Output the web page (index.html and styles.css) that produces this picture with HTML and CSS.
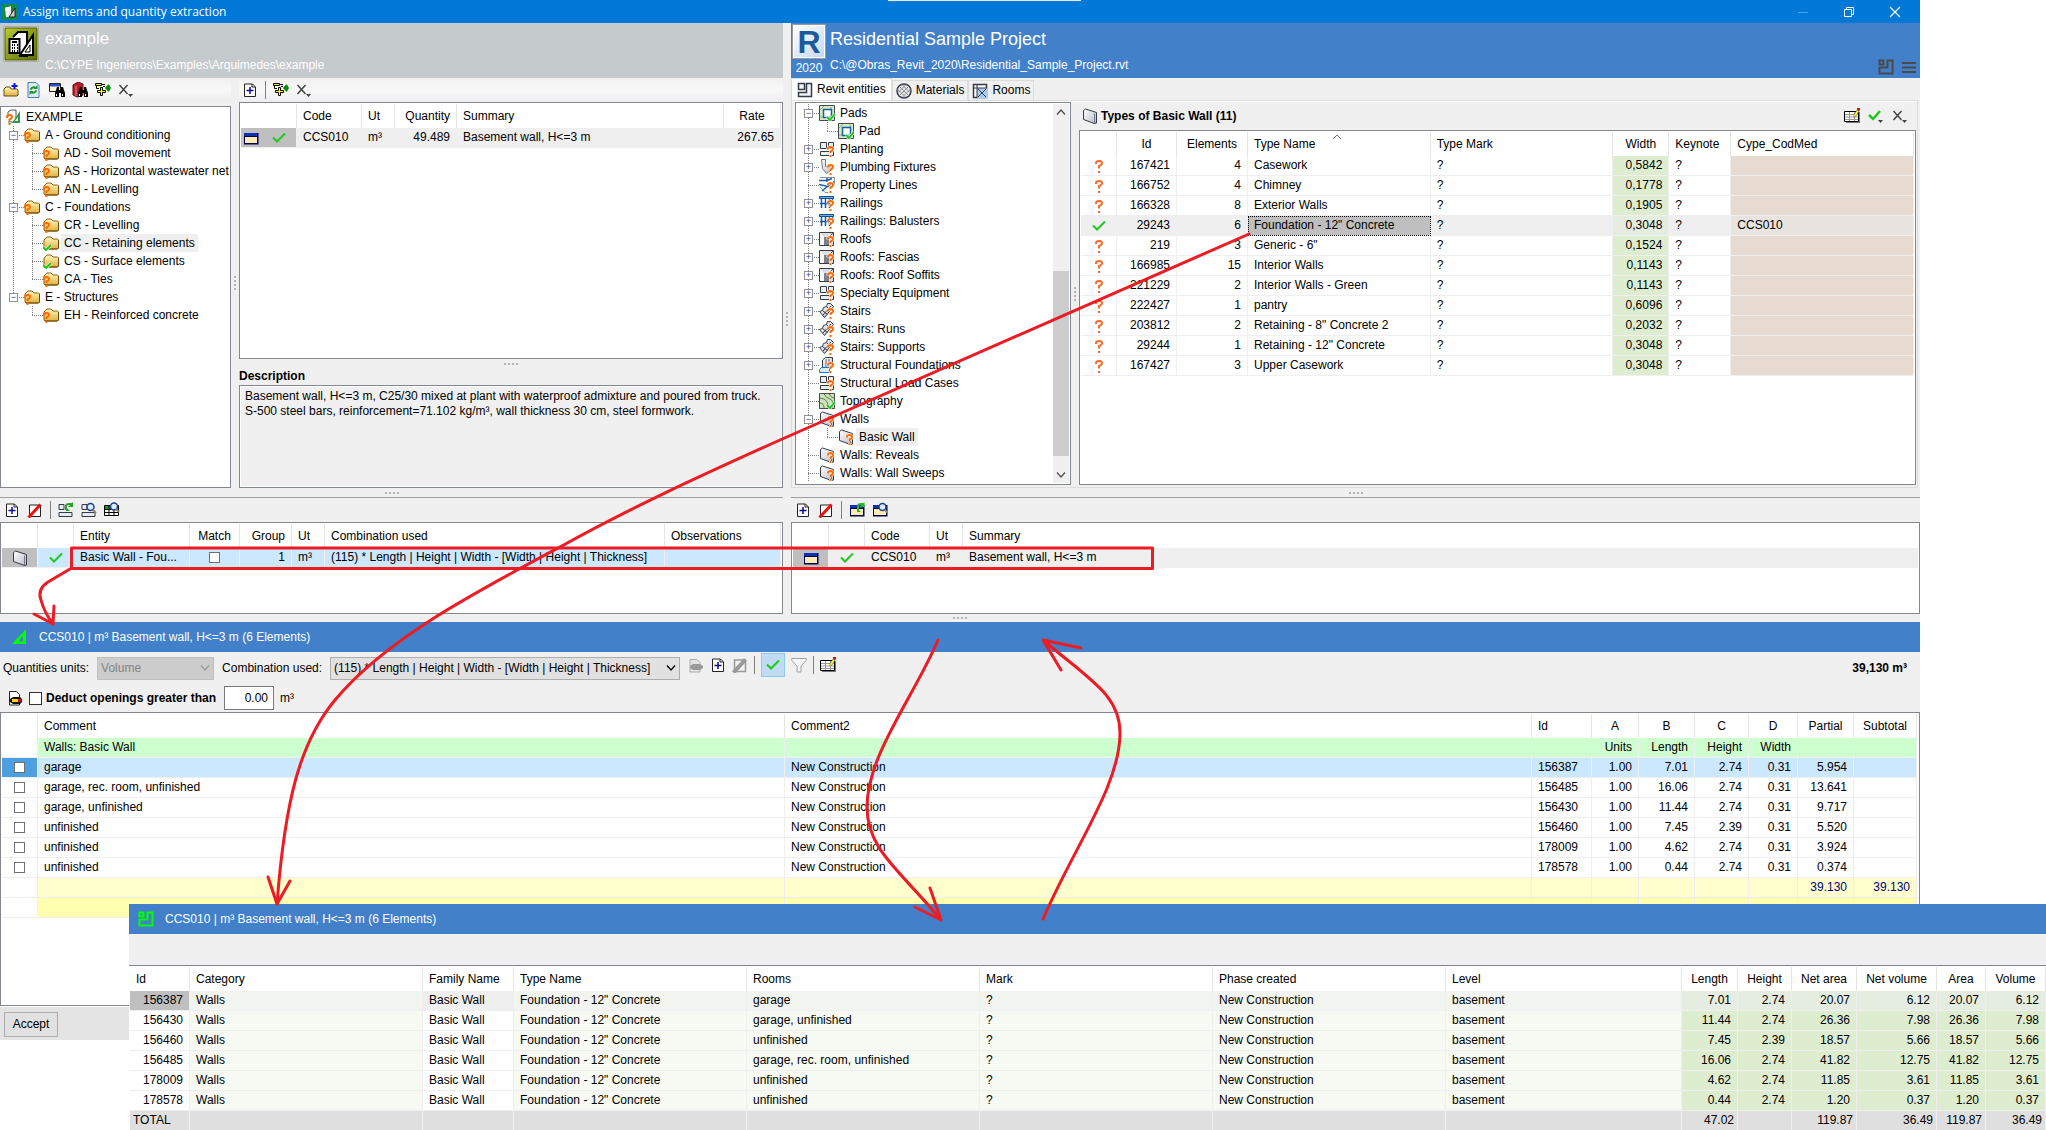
FILE: index.html
```html
<!DOCTYPE html>
<html lang="en">
<head>
  <meta charset="UTF-8">
  <meta name="viewport" content="width=device-width, initial-scale=1.0">
  <title>Assign items and quantity extraction</title>
  <link rel="stylesheet" href="styles.css">
</head>
<body>
  <!-- Icon set -->
  <svg class="icon-set" aria-hidden="true">
    <defs>
      <linearGradient id="gold" x1="0" y1="0" x2="0" y2="1"><stop offset="0" stop-color="#fff6c0"/><stop offset="1" stop-color="#e3b13c"/></linearGradient>
      <linearGradient id="steel" x1="0" y1="0" x2="1" y2="1"><stop offset="0" stop-color="#ffffff"/><stop offset="1" stop-color="#b9bcc8"/></linearGradient>
      <linearGradient id="olive" x1="0" y1="0" x2="1" y2="1"><stop offset="0" stop-color="#b9cc2c"/><stop offset="1" stop-color="#5d6c08"/></linearGradient>
    </defs>
    <symbol id="q" viewBox="0 0 16 16"><path d="M9 8.500v-1q0-1.500 2.500-1.500t2.500 2q0 1.500-2.500 2.500v1.500M11.500 14v2" fill="none" stroke="#fff" stroke-width="3"/><path d="M9 8.500v-1q0-1.500 2.500-1.500t2.500 2q0 1.500-2.500 2.500v1.500M11.500 14v2" fill="none" stroke="#ff6a00" stroke-width="2"/></symbol>
    <symbol id="ok" viewBox="0 0 16 16"><path d="M8 12l3 3 5-6" fill="none" stroke="#fff" stroke-width="3"/><path d="M8 12l3 3 5-6" fill="none" stroke="#1fc81f" stroke-width="2"/></symbol>
    <symbol id="folder" viewBox="0 0 16 16"><path d="M1 13V5l3-3h4l2 2h4.500l1 1v8l-1.500 1H2z" fill="url(#gold)" stroke="#8a6414"/><path d="M2 14h12.500l1-1V5" fill="none" stroke="#6b4a08"/></symbol>
    <symbol id="folder-q" viewBox="0 0 16 16"><use href="#folder"/><path d="M1 9V8q0-2 2.500-2T6 8q0 1.500-2.500 2.500V12M3.500 14v2" fill="none" stroke="#ff6a00" stroke-width="2"/></symbol>
    <symbol id="folder-ok" viewBox="0 0 16 16"><use href="#folder"/><path d="M0 12l3 3 5-5" fill="none" stroke="#fff" stroke-width="3"/><path d="M0 12l3 3 5-5" fill="none" stroke="#1fc81f" stroke-width="2"/></symbol>
    <symbol id="root" viewBox="0 0 16 16"><path d="M3 8V3l3-2h5v12H3" fill="#fff" stroke="#555"/><path d="M15 2v12H7z" fill="#2f9a4c"/><path d="M13 8v4h-3z" fill="#fff"/><path d="M2 9V8q0-2 2.500-2T7 8q0 1.500-2.500 2.500V12M4.500 14v2" fill="none" stroke="#ff6a00" stroke-width="2"/></symbol>
    <symbol id="new-folder" viewBox="0 0 16 16"><path d="M1 14V7l2-2h4l1 2h6l1 1v5l-1 1z" fill="url(#gold)" stroke="#6b4a08"/><path d="M11.500 1v6M8.500 4h6" stroke="#1414e0" stroke-width="2"/></symbol>
    <symbol id="refresh" viewBox="0 0 16 16"><path d="M2 .5h8l3 3v12H2z" fill="#d9ebfb" stroke="#4a7fb5"/><path d="M4.500 7.500q3-4 6-1M10.500 8.500q-3 4-6 1" fill="none" stroke="#20962a" stroke-width="2"/><path d="M11.500 3v4h-4zM3.500 13V9h4z" fill="#20962a"/></symbol>
    <symbol id="bino" viewBox="0 0 16 16"><path d="M6 15V11l2-6h2v3h2V5h2l2 6v4h-4v-4h-2v4z" fill="#000"/><path d="M7.500 12v2M13.500 12v2" stroke="#fff"/></symbol>
    <symbol id="find-item" viewBox="0 0 16 16"><path d="M.5 1.500h11v8H.5z" fill="#fffbd0" stroke="#222"/><path d="M1 2h10v2.500H1z" fill="#2a4fc8"/><use href="#bino"/></symbol>
    <symbol id="find-red" viewBox="0 0 16 16"><path d="M1 3l5-3 5 2v11l-6 2-4-2z" fill="#b3202a" stroke="#6d0b12"/><path d="M4 4v10" stroke="#ee8a90"/><use href="#bino"/></symbol>
    <symbol id="assign" viewBox="0 0 16 16"><path d="M.5 1.500h6v2h-6z" fill="#ff0" stroke="#000"/><path d="M1.500 4v2.500H4" fill="none" stroke="#000"/><path d="M5.500 5.500h2v3h3v2h-3v3h-2v-3h-3v-2h3z" fill="#ff0" stroke="#000"/><path d="M10 6l3-3.500h1L16 6l-2 3.500h-1z" fill="#0a8a0a"/><path d="M7 2.500h3M8 4.500h2" stroke="#000"/></symbol>
    <symbol id="cross" viewBox="0 0 16 16"><path d="M1.500 3l8 9M9.500 3l-8 9" stroke="#444" stroke-width="1.500"/><path d="M10 12h5l-2.500 3z" fill="#444"/></symbol>
    <symbol id="check-menu" viewBox="0 0 16 16"><path d="M1 7l4 4 7-8" fill="none" stroke="#1fc81f" stroke-width="2.500"/><path d="M10 12h5l-2.500 3z" fill="#444"/></symbol>
    <symbol id="check" viewBox="0 0 16 16"><path d="M2 7.500l4 4 8-8" fill="none" stroke="#1fc81f" stroke-width="2"/></symbol>
    <symbol id="ask" viewBox="0 0 16 16"><path d="M5 6V5q0-2 3-2t3 2q0 2-3 3v2.500M8 13v2" fill="none" stroke="#ff6a2a" stroke-width="2"/></symbol>
    <symbol id="new-doc" viewBox="0 0 16 16"><path d="M2.500 2h8l3 3v9.500h-11z" fill="#fff" stroke="#222"/><path d="M10 2v3h3" fill="none" stroke="#222"/><path d="M8 5v7M4.500 8.500h7" stroke="#0a0a90" stroke-width="1.500"/></symbol>
    <symbol id="edit-doc" viewBox="0 0 16 16"><path d="M2.500 3h11v11.500h-11z" fill="#fff" stroke="#222"/><path d="M1.500 15.500l12-13" stroke="#f01010" stroke-width="3"/></symbol>
    <symbol id="edit-doc-off" viewBox="0 0 16 16"><path d="M2.500 3h11v11.500h-11z" fill="none" stroke="#999" stroke-width="1.500"/><path d="M1.500 15.500l12-13" stroke="#999" stroke-width="4"/></symbol>
    <symbol id="sync-ent" viewBox="0 0 16 16"><path d="M1 2.500h5v5H1zM1 10.500h13v4H1z" fill="#e8eaf0" stroke="#333a48"/><path d="M8 8V4q0-2 3-2h3" fill="none" stroke="#28a820" stroke-width="2"/><path d="M15 0v5h-5zM8 9V5l4 4z" fill="#28a820"/></symbol>
    <symbol id="find-ent" viewBox="0 0 16 16"><path d="M1 2.500h5v5H1zM1 10.500h13v4H1z" fill="#e8eaf0" stroke="#333a48"/><circle cx="9.500" cy="5" r="3.500" fill="#dcecff" stroke="#24408a" stroke-width="1.500"/><path d="M12 8l3 3" stroke="#886" stroke-width="2"/></symbol>
    <symbol id="find-grid" viewBox="0 0 16 16"><path d="M.5 3.500h14v10H.5z" fill="#fff" stroke="#000"/><path d="M1 4h6v3H1z" fill="#18902c"/><path d="M0 7.500h15M0 10.500h15M5 4v9M10 4v9" stroke="#000"/><circle cx="10" cy="4.500" r="3.500" fill="#dcecff" stroke="#24408a" stroke-width="1.500"/><path d="M12 7l3 3" stroke="#886" stroke-width="2"/></symbol>
    <symbol id="item" viewBox="0 0 16 16"><path d="M1 3h14.500v11.500H1z" fill="#000050"/><path d="M1 3h13v3H1z" fill="#1030b8"/><path d="M2 7h12v6H2z" fill="#ffedb0"/></symbol>
    <symbol id="sync-item" viewBox="0 0 16 16"><use href="#item"/><path d="M9 9V4q0-2 3-2h2" fill="none" stroke="#28b820" stroke-width="2"/><path d="M15.500 0v5h-5zM8 10V6l4 4z" fill="#28b820"/></symbol>
    <symbol id="find-item2" viewBox="0 0 16 16"><use href="#item"/><circle cx="10.500" cy="5" r="3.500" fill="#dcecff" stroke="#24408a" stroke-width="1.500"/><path d="M13 8l3 3" stroke="#886" stroke-width="2"/></symbol>
    <symbol id="grid-edit" viewBox="0 0 16 16"><path d="M2 4h14v11H2z" fill="#777"/><path d="M.5 3.500h14v10H.5z" fill="#fff" stroke="#000"/><path d="M1 6.500h13M1 9h13M1 11.500h13M5.500 4v9M10.500 4v9" stroke="#999"/><path d="M10 7l3-5 2 1-3 5-2 1z" fill="#ff0" stroke="#555" stroke-width=".5"/><path d="M13 0h3v2l-1 1-2-1z" fill="#d01010"/></symbol>
    <symbol id="wall" viewBox="0 0 16 16"><path d="M1.500 2.500l2-1.500 11 3.500V15l-2 .5-11-4z" fill="url(#steel)" stroke="#333a48" stroke-linejoin="round"/><path d="M12.500 5.500V15" stroke="#778"/></symbol>
    <symbol id="wall-q" viewBox="0 0 16 16"><use href="#wall"/><use href="#q"/></symbol>
    <symbol id="pad" viewBox="0 0 16 16"><path d="M.5.500h15v15H.5z" fill="#d5e8c4" stroke="#444b4a"/><path d="M1 5l4-4M11 15l4-4M1 12h3M12 2v2" stroke="#8bae78"/><path d="M4.500 4.500h8v8h-8z" fill="#fff" stroke="#1560a8" stroke-width="1.500"/><use href="#ok"/></symbol>
    <symbol id="boxes" viewBox="0 0 16 16"><path d="M1.500 1.500h6v6h-6zM9.500 1.500h5v6h-5zM1.500 10.500h13v4h-13z" fill="#eceef3" stroke="#333a48"/><use href="#q"/></symbol>
    <symbol id="plumb" viewBox="0 0 16 16"><path d="M2.500.500h4v7h6l-1 4-4 3-4-5z" fill="url(#steel)" stroke="#707680"/><use href="#q"/></symbol>
    <symbol id="lines" viewBox="0 0 16 16"><path d="M1 .5h14.500V8M1 10l5 5.500h3" fill="none" stroke="#8a909a"/><path d="M0 3.500h8l5-2M0 7.500l9 2 6-5M8 1v4M3 14l6-5" fill="none" stroke="#1560a8" stroke-width="1.500"/><use href="#q"/></symbol>
    <symbol id="rail" viewBox="0 0 16 16"><path d="M.5 1.500h14v2H.5z" fill="#6ab0e8" stroke="#0d4f90"/><path d="M2.500 4v9M6.500 4v9M10.500 4v9M13.500 4v3M1 8.500h10" stroke="#0d5aa5" stroke-width="1.500"/><use href="#q"/></symbol>
    <symbol id="roof" viewBox="0 0 16 16"><path d="M.5 1.500h14v13H.5z" fill="#dcdee4" stroke="#333a48"/><path d="M1 2l4 4v8H1z" fill="#fff"/><path d="M5 6h5v8H5z" fill="#7d818c"/><path d="M10 6l4-4" stroke="#555"/><use href="#q"/></symbol>
    <symbol id="stairs" viewBox="0 0 16 16"><path d="M.5 8.500l3-1 1-3 3-1 1-3h3l3 3-9 11z" fill="url(#steel)" stroke="#333a48"/><path d="M3.500 7.500l5 4M7.500 3.500l4 4M4 12l8-9" stroke="#333a48"/><use href="#q"/></symbol>
    <symbol id="found" viewBox="0 0 16 16"><path d="M3.500 11V3l3-2.500h7V11" fill="url(#steel)" stroke="#333a48"/><path d="M7 2v9M10 2v4" stroke="#667"/><path d="M.5 12.500l2-2h8v5h-10z" fill="#d6ebfb" stroke="#1a78c8"/><use href="#q"/></symbol>
    <symbol id="topo" viewBox="0 0 16 16"><path d="M.5.500h15v15H.5z" fill="#cfe3bb" stroke="#444b4a"/><path d="M1 5q9 1 8 10M5 1q2 4 6 5t2 9M1 10q4 0 4 5M10 1q1 3 5 4" fill="none" stroke="#5d7a58"/><use href="#ok"/></symbol>
    <symbol id="entities" viewBox="0 0 16 16"><path d="M1.500 1.500h6v6h-6zM9.500 1.500h5v13h-13v-4h8z" fill="#f2f3f6" stroke="#333a48" stroke-width="1.500"/></symbol>
    <symbol id="material" viewBox="0 0 16 16"><circle cx="8" cy="8" r="7" fill="#e8e8e8" stroke="#333a48" stroke-width="1.500"/><path d="M3 3l10 10M6 1.500L14.500 10M1.500 6L10 14.500M13 3L3 13M10 1.500L1.500 10M14.500 6L6 14.500" stroke="#8d8f98"/></symbol>
    <symbol id="rooms" viewBox="0 0 16 16"><path d="M1.500 1.500h13v13h-13z" fill="#fff" stroke="#333a48" stroke-width="1.500"/><path d="M5 5h10v10H5z" fill="#a9cdee"/><path d="M5 2v13M2 5h13M6 6l8 8M14 6l-8 8" stroke="#333a48"/></symbol>
    <symbol id="plan" viewBox="0 0 16 16"><path d="M1.500 1.500h4v4h-4zM9.500 1.500h5v13h-13V8.500h8z" fill="none" stroke="currentColor" stroke-width="2"/></symbol>
    <symbol id="menu" viewBox="0 0 16 16"><path d="M1 4h14M1 8.500h14M1 13h14" stroke="currentColor" stroke-width="2"/></symbol>
    <symbol id="cloud-off" viewBox="0 0 16 16"><path d="M2 2.500h7l3 3V15H2z" fill="#e4e4e4" stroke="#aaa"/><path d="M2 9l3-2h7l3 2v2l-3 2H5l-3-2z" fill="#999"/></symbol>
    <symbol id="funnel" viewBox="0 0 16 16"><path d="M.8 1.500h14.400v2L10 9v6H6V9L.8 3.500z" fill="#f6f6f6" stroke="#a0a0a8"/></symbol>
    <symbol id="square" viewBox="0 0 16 16"><path d="M14 0v15H0zM11 7v5.500H6z" fill="#0f0" fill-rule="evenodd"/></symbol>
    <symbol id="opening" viewBox="0 0 16 16"><path d="M2.500 1.500h7l3 3V15h-10z" fill="#fff" stroke="#222"/><path d="M3 9l3-2h7l2 2v3l-2 2H6l-3-2z" fill="#111"/><path d="M5 9h6v3H5z" fill="#ffd800"/><path d="M11 9h3v3h-3z" fill="#d01010"/></symbol>
    <symbol id="chevron" viewBox="0 0 16 16"><path d="M4 5.500l4 4.500 4-4.500" fill="none" stroke="currentColor" stroke-width="1.300"/></symbol>
  </svg>

  <div class="window">
    <header class="titlebar">
      <svg class="icon" viewBox="0 0 16 16"><path d="M0 0h16v16H0z" fill="#128a4a"/><path d="M3 4l6-2v11H4z" fill="#eee"/><path d="M13 4v9H7z" fill="#ccc" stroke="#222"/><circle cx="5" cy="5" r="2" fill="#fff"/></svg>
      <h1>Assign items and quantity extraction</h1>
      <div class="title-buttons">
        <button aria-label="Minimize"><svg class="icon" viewBox="0 0 16 16"><path d="M3 8.500h10" stroke="#4aa0e6"/></svg></button>
        <button aria-label="Restore"><svg class="icon" viewBox="0 0 16 16"><path d="M3.500 5.500h7v7h-7zM5.500 5V3.500h7v7H11" fill="none" stroke="#fff"/></svg></button>
        <button aria-label="Close"><svg class="icon" viewBox="0 0 16 16"><path d="M3 3l10 10M13 3L3 13" stroke="#fff" stroke-width="1.200"/></svg></button>
      </div>
    </header>

    <div class="workspace">
      <section class="side">
        <div class="banner banner-gray">
          <svg class="logo" viewBox="0 0 36 36"><path d="M.5.500h35v35H.5z" fill="#e9ead8" stroke="#aaa"/><path d="M2 2h32v32H2z" fill="url(#olive)" stroke="#4c5a06"/><path d="M10 11l5-5h9v24h-8" fill="#fff" stroke="#000" stroke-width="2"/><path d="M30 9v20H17z" fill="#fff" stroke="#000" stroke-width="2"/><path d="M27 19v7h-5z" fill="#fff" stroke="#000"/><path d="M6.500 13h10v14h-10z" fill="#fff" stroke="#000" stroke-width="2"/><path d="M9 16h5M9 19h1M11 19h1M14 19h1M9 22h1M11 22h1M14 22h1M9 25h1M11 25h1M14 25h1" stroke="#000" stroke-width="2"/></svg>
          <div class="banner-text">
            <h2>example</h2>
            <p>C:\CYPE Ingenieros\Examples\Arquimedes\example</p>
          </div>
        </div>
        <div class="job">
          <div class="job-tree">
            <div class="toolbar">
              <button aria-label="New chapter"><svg class="icon"><use href="#new-folder"/></svg></button>
              <button aria-label="Refresh"><svg class="icon"><use href="#refresh"/></svg></button>
              <button aria-label="Find item"><svg class="icon"><use href="#find-item"/></svg></button>
              <button aria-label="Find in bank"><svg class="icon"><use href="#find-red"/></svg></button>
              <button aria-label="Assign"><svg class="icon"><use href="#assign"/></svg></button>
              <button aria-label="Remove"><svg class="icon"><use href="#cross"/></svg></button>
            </div>
            <div class="box tree">
              <div class="row root"><svg class="icon"><use href="#root"/></svg><span class="label">EXAMPLE</span></div>
              <ul>
                <li><div class="row"><button class="toggle" aria-label="Collapse">−</button><svg class="icon"><use href="#folder-q"/></svg><span class="label">A - Ground conditioning</span></div>
                  <ul>
                    <li><div class="row"><svg class="icon"><use href="#folder-q"/></svg><span class="label">AD - Soil movement</span></div></li>
                    <li><div class="row"><svg class="icon"><use href="#folder-q"/></svg><span class="label">AS - Horizontal wastewater net</span></div></li>
                    <li><div class="row"><svg class="icon"><use href="#folder-q"/></svg><span class="label">AN - Levelling</span></div></li>
                  </ul>
                </li>
                <li><div class="row"><button class="toggle" aria-label="Collapse">−</button><svg class="icon"><use href="#folder-q"/></svg><span class="label">C - Foundations</span></div>
                  <ul>
                    <li><div class="row"><svg class="icon"><use href="#folder-q"/></svg><span class="label">CR - Levelling</span></div></li>
                    <li><div class="row"><svg class="icon"><use href="#folder-ok"/></svg><span class="label selected">CC - Retaining elements</span></div></li>
                    <li><div class="row"><svg class="icon"><use href="#folder-ok"/></svg><span class="label">CS - Surface elements</span></div></li>
                    <li><div class="row"><svg class="icon"><use href="#folder-q"/></svg><span class="label">CA - Ties</span></div></li>
                  </ul>
                </li>
                <li><div class="row"><button class="toggle" aria-label="Collapse">−</button><svg class="icon"><use href="#folder-q"/></svg><span class="label">E - Structures</span></div>
                  <ul>
                    <li><div class="row"><svg class="icon"><use href="#folder-q"/></svg><span class="label">EH - Reinforced concrete</span></div></li>
                  </ul>
                </li>
              </ul>
            </div>
          </div>
          <div class="split-v"></div>
          <div class="job-items">
            <div class="toolbar">
              <button aria-label="New item"><svg class="icon"><use href="#new-doc"/></svg></button>
              <span class="sep"></span>
              <button aria-label="Assign"><svg class="icon"><use href="#assign"/></svg></button>
              <button aria-label="Remove"><svg class="icon"><use href="#cross"/></svg></button>
            </div>
            <div class="box grow">
              <table>
                <colgroup><col class="w20"><col class="w36"><col class="w65"><col class="w33"><col class="w62"><col><col class="w57"></colgroup>
                <thead><tr><th class="plain"></th><th></th><th>Code</th><th>Ut</th><th class="num">Quantity</th><th>Summary</th><th class="mid">Rate</th></tr></thead>
                <tbody><tr class="current"><td class="mark joined"><svg class="icon"><use href="#item"/></svg></td><td class="mark"><svg class="icon"><use href="#check"/></svg></td><td>CCS010</td><td>m³</td><td class="num">49.489</td><td>Basement wall, H&lt;=3 m</td><td class="num">267.65</td></tr></tbody>
              </table>
            </div>
            <div class="split-h"></div>
            <label class="desc-label" for="description">Description</label>
            <textarea id="description" class="description" readonly>Basement wall, H&lt;=3 m, C25/30 mixed at plant with waterproof admixture and poured from truck.
S-500 steel bars, reinforcement=71.102 kg/m³, wall thickness 30 cm, steel formwork.</textarea>
          </div>
        </div>
        <div class="split-h"></div>
        <div class="toolbar ruled">
          <button aria-label="New row"><svg class="icon"><use href="#new-doc"/></svg></button>
          <button aria-label="Delete row"><svg class="icon"><use href="#edit-doc"/></svg></button>
          <span class="sep"></span>
          <button aria-label="Update entities"><svg class="icon"><use href="#sync-ent"/></svg></button>
          <button aria-label="Find entities"><svg class="icon"><use href="#find-ent"/></svg></button>
          <button aria-label="Find in list"><svg class="icon"><use href="#find-grid"/></svg></button>
        </div>
        <div class="box links">
          <table>
            <colgroup><col class="w36"><col class="w36"><col class="w116"><col class="w50"><col class="w52"><col class="w33"><col><col class="w116"></colgroup>
            <thead><tr><th></th><th></th><th>Entity</th><th class="mid">Match</th><th class="num">Group</th><th>Ut</th><th>Combination used</th><th>Observations</th></tr></thead>
            <tbody><tr class="active"><td class="mark"><svg class="icon"><use href="#wall"/></svg></td><td class="mid"><svg class="icon"><use href="#check"/></svg></td><td>Basic Wall - Fou...</td><td class="mid"><input type="checkbox" aria-label="Match"></td><td class="num">1</td><td>m³</td><td>(115) * Length | Height | Width - [Width | Height | Thickness]</td><td></td></tr></tbody>
          </table>
        </div>
      </section>

      <div class="split-v"></div>

      <section class="side">
        <div class="banner banner-blue">
          <div class="revit"><span class="revit-logo">R</span><span>2020</span></div>
          <div class="banner-text">
            <h2 class="wide">Residential Sample Project</h2>
            <p>C:\@Obras_Revit_2020\Residential_Sample_Project.rvt</p>
          </div>
          <div class="banner-tools">
            <button aria-label="Plan"><svg class="icon"><use href="#plan"/></svg></button>
            <button aria-label="Menu"><svg class="icon"><use href="#menu"/></svg></button>
          </div>
        </div>
        <div class="tabs" role="tablist">
          <button role="tab" class="tab open" aria-selected="true"><svg class="icon"><use href="#entities"/></svg>Revit entities</button>
          <button role="tab" class="tab"><svg class="icon"><use href="#material"/></svg>Materials</button>
          <button role="tab" class="tab"><svg class="icon"><use href="#rooms"/></svg>Rooms</button>
        </div>
        <div class="tab-page">
          <div class="box tree tree-scroll">
            <ul class="continued">
              <li><div class="row"><button class="toggle" aria-label="Collapse">−</button><svg class="icon"><use href="#pad"/></svg><span class="label">Pads</span></div>
                <ul><li><div class="row"><svg class="icon"><use href="#pad"/></svg><span class="label">Pad</span></div></li></ul>
              </li>
              <li><div class="row"><button class="toggle" aria-label="Expand">+</button><svg class="icon"><use href="#boxes"/></svg><span class="label">Planting</span></div></li>
              <li><div class="row"><button class="toggle" aria-label="Expand">+</button><svg class="icon"><use href="#plumb"/></svg><span class="label">Plumbing Fixtures</span></div></li>
              <li><div class="row"><svg class="icon"><use href="#lines"/></svg><span class="label">Property Lines</span></div></li>
              <li><div class="row"><button class="toggle" aria-label="Expand">+</button><svg class="icon"><use href="#rail"/></svg><span class="label">Railings</span></div></li>
              <li><div class="row"><button class="toggle" aria-label="Expand">+</button><svg class="icon"><use href="#rail"/></svg><span class="label">Railings: Balusters</span></div></li>
              <li><div class="row"><button class="toggle" aria-label="Expand">+</button><svg class="icon"><use href="#roof"/></svg><span class="label">Roofs</span></div></li>
              <li><div class="row"><button class="toggle" aria-label="Expand">+</button><svg class="icon"><use href="#roof"/></svg><span class="label">Roofs: Fascias</span></div></li>
              <li><div class="row"><button class="toggle" aria-label="Expand">+</button><svg class="icon"><use href="#roof"/></svg><span class="label">Roofs: Roof Soffits</span></div></li>
              <li><div class="row"><button class="toggle" aria-label="Expand">+</button><svg class="icon"><use href="#boxes"/></svg><span class="label">Specialty Equipment</span></div></li>
              <li><div class="row"><button class="toggle" aria-label="Expand">+</button><svg class="icon"><use href="#stairs"/></svg><span class="label">Stairs</span></div></li>
              <li><div class="row"><button class="toggle" aria-label="Expand">+</button><svg class="icon"><use href="#stairs"/></svg><span class="label">Stairs: Runs</span></div></li>
              <li><div class="row"><button class="toggle" aria-label="Expand">+</button><svg class="icon"><use href="#stairs"/></svg><span class="label">Stairs: Supports</span></div></li>
              <li><div class="row"><button class="toggle" aria-label="Expand">+</button><svg class="icon"><use href="#found"/></svg><span class="label">Structural Foundations</span></div></li>
              <li><div class="row"><svg class="icon"><use href="#boxes"/></svg><span class="label">Structural Load Cases</span></div></li>
              <li><div class="row"><svg class="icon"><use href="#topo"/></svg><span class="label">Topography</span></div></li>
              <li><div class="row"><button class="toggle" aria-label="Collapse">−</button><svg class="icon"><use href="#wall-q"/></svg><span class="label">Walls</span></div>
                <ul><li><div class="row"><svg class="icon"><use href="#wall-q"/></svg><span class="label selected">Basic Wall</span></div></li></ul>
              </li>
              <li><div class="row"><svg class="icon"><use href="#wall-q"/></svg><span class="label">Walls: Reveals</span></div></li>
              <li><div class="row"><svg class="icon"><use href="#wall-q"/></svg><span class="label">Walls: Wall Sweeps</span></div></li>
            </ul>
            <div class="scrollbar">
              <svg class="icon flip"><use href="#chevron"/></svg>
              <div class="track"><div class="thumb"></div></div>
              <svg class="icon"><use href="#chevron"/></svg>
            </div>
          </div>
          <div class="split-v"></div>
          <div class="types">
            <div class="types-head">
              <svg class="icon"><use href="#wall"/></svg>
              <h3>Types of Basic Wall (11)</h3>
              <button aria-label="Edit columns"><svg class="icon"><use href="#grid-edit"/></svg></button>
              <button aria-label="Mark"><svg class="icon"><use href="#check-menu"/></svg></button>
              <button aria-label="Remove"><svg class="icon"><use href="#cross"/></svg></button>
            </div>
            <div class="box grow">
              <table class="types-table">
                <colgroup><col class="w36"><col class="w60"><col class="w71"><col><col><col class="w56"><col class="w62"><col></colgroup>
                <thead><tr><th></th><th class="mid">Id</th><th class="mid">Elements</th><th class="sorted">Type Name</th><th>Type Mark</th><th class="mid">Width</th><th>Keynote</th><th>Cype_CodMed</th></tr></thead>
                <tbody>
                  <tr><td class="mid"><svg class="icon"><use href="#ask"/></svg></td><td class="num">167421</td><td class="num">4</td><td>Casework</td><td>?</td><td class="num green">0,5842</td><td>?</td><td class="tan"></td></tr>
                  <tr><td class="mid"><svg class="icon"><use href="#ask"/></svg></td><td class="num">166752</td><td class="num">4</td><td>Chimney</td><td>?</td><td class="num green">0,1778</td><td>?</td><td class="tan"></td></tr>
                  <tr><td class="mid"><svg class="icon"><use href="#ask"/></svg></td><td class="num">166328</td><td class="num">8</td><td>Exterior Walls</td><td>?</td><td class="num green">0,1905</td><td>?</td><td class="tan"></td></tr>
                  <tr class="current"><td class="mid"><svg class="icon"><use href="#check"/></svg></td><td class="num">29243</td><td class="num">6</td><td class="focus">Foundation - 12" Concrete</td><td>?</td><td class="num green">0,3048</td><td>?</td><td class="tan">CCS010</td></tr>
                  <tr><td class="mid"><svg class="icon"><use href="#ask"/></svg></td><td class="num">219</td><td class="num">3</td><td>Generic - 6"</td><td>?</td><td class="num green">0,1524</td><td>?</td><td class="tan"></td></tr>
                  <tr><td class="mid"><svg class="icon"><use href="#ask"/></svg></td><td class="num">166985</td><td class="num">15</td><td>Interior Walls</td><td>?</td><td class="num green">0,1143</td><td>?</td><td class="tan"></td></tr>
                  <tr><td class="mid"><svg class="icon"><use href="#ask"/></svg></td><td class="num">221229</td><td class="num">2</td><td>Interior Walls - Green</td><td>?</td><td class="num green">0,1143</td><td>?</td><td class="tan"></td></tr>
                  <tr><td class="mid"><svg class="icon"><use href="#ask"/></svg></td><td class="num">222427</td><td class="num">1</td><td>pantry</td><td>?</td><td class="num green">0,6096</td><td>?</td><td class="tan"></td></tr>
                  <tr><td class="mid"><svg class="icon"><use href="#ask"/></svg></td><td class="num">203812</td><td class="num">2</td><td>Retaining - 8" Concrete 2</td><td>?</td><td class="num green">0,2032</td><td>?</td><td class="tan"></td></tr>
                  <tr><td class="mid"><svg class="icon"><use href="#ask"/></svg></td><td class="num">29244</td><td class="num">1</td><td>Retaining - 12" Concrete</td><td>?</td><td class="num green">0,3048</td><td>?</td><td class="tan"></td></tr>
                  <tr><td class="mid"><svg class="icon"><use href="#ask"/></svg></td><td class="num">167427</td><td class="num">3</td><td>Upper Casework</td><td>?</td><td class="num green">0,3048</td><td>?</td><td class="tan"></td></tr>
                </tbody>
              </table>
            </div>
          </div>
        </div>
        <div class="split-h"></div>
        <div class="toolbar ruled">
          <button aria-label="New row"><svg class="icon"><use href="#new-doc"/></svg></button>
          <button aria-label="Delete row"><svg class="icon"><use href="#edit-doc"/></svg></button>
          <span class="sep"></span>
          <button aria-label="Update items"><svg class="icon"><use href="#sync-item"/></svg></button>
          <button aria-label="Find items"><svg class="icon"><use href="#find-item2"/></svg></button>
        </div>
        <div class="box links">
          <table>
            <colgroup><col class="w36"><col class="w36"><col class="w65"><col class="w33"><col></colgroup>
            <thead><tr><th></th><th></th><th>Code</th><th>Ut</th><th class="plain">Summary</th></tr></thead>
            <tbody><tr class="current"><td class="mark"><svg class="icon"><use href="#item"/></svg></td><td class="mid"><svg class="icon"><use href="#check"/></svg></td><td>CCS010</td><td>m³</td><td>Basement wall, H&lt;=3 m</td></tr></tbody>
          </table>
        </div>
      </section>
    </div>

    <div class="split-h short"></div>

    <section class="detail">
      <div class="bluebar"><svg class="icon"><use href="#square"/></svg><h3>CCS010 | m³ Basement wall, H&lt;=3 m (6 Elements)</h3></div>
      <div class="form-row">
        <label for="units">Quantities units:</label>
        <span class="combo combo-units"><select id="units" disabled><option>Volume</option></select><svg class="icon"><use href="#chevron"/></svg></span>
        <label for="combination">Combination used:</label>
        <span class="combo combo-wide"><select id="combination"><option>(115) * Length | Height | Width - [Width | Height | Thickness]</option></select><svg class="icon"><use href="#chevron"/></svg></span>
        <div class="form-tools">
          <button aria-label="Edit opening"><svg class="icon"><use href="#cloud-off"/></svg></button>
          <button aria-label="New line"><svg class="icon"><use href="#new-doc"/></svg></button>
          <button aria-label="Delete line"><svg class="icon"><use href="#edit-doc-off"/></svg></button>
          <span class="sep"></span>
          <button class="pressed" aria-label="Show marked"><svg class="icon"><use href="#check"/></svg></button>
          <button aria-label="Filter"><svg class="icon"><use href="#funnel"/></svg></button>
          <span class="sep"></span>
          <button aria-label="Edit columns"><svg class="icon"><use href="#grid-edit"/></svg></button>
        </div>
        <strong class="total">39,130 m³</strong>
      </div>
      <div class="form-row second">
        <svg class="icon"><use href="#opening"/></svg>
        <input type="checkbox" id="deduct" class="big"><label for="deduct"><b>Deduct openings greater than</b></label>
        <input type="text" class="amount" id="amount" value="0.00"><label for="amount">m³</label>
      </div>
      <div class="box measures">
        <table>
          <colgroup><col class="w36"><col><col><col class="w60"><col class="w47"><col class="w56"><col class="w54"><col class="w49"><col class="w56"><col class="w63"></colgroup>
          <thead><tr><th></th><th>Comment</th><th>Comment2</th><th>Id</th><th class="mid">A</th><th class="mid">B</th><th class="mid">C</th><th class="mid">D</th><th class="mid">Partial</th><th class="mid">Subtotal</th></tr></thead>
          <tbody>
            <tr class="group"><td></td><td>Walls: Basic Wall</td><td></td><td></td><td class="num">Units</td><td class="num">Length</td><td class="num">Height</td><td class="num">Width</td><td></td><td></td></tr>
            <tr class="active"><td class="mid pick"><input type="checkbox" aria-label="156387"></td><td>garage</td><td>New Construction</td><td>156387</td><td class="num">1.00</td><td class="num">7.01</td><td class="num">2.74</td><td class="num">0.31</td><td class="num">5.954</td><td></td></tr>
            <tr><td class="mid"><input type="checkbox" aria-label="156485"></td><td>garage, rec. room, unfinished</td><td>New Construction</td><td>156485</td><td class="num">1.00</td><td class="num">16.06</td><td class="num">2.74</td><td class="num">0.31</td><td class="num">13.641</td><td></td></tr>
            <tr><td class="mid"><input type="checkbox" aria-label="156430"></td><td>garage, unfinished</td><td>New Construction</td><td>156430</td><td class="num">1.00</td><td class="num">11.44</td><td class="num">2.74</td><td class="num">0.31</td><td class="num">9.717</td><td></td></tr>
            <tr><td class="mid"><input type="checkbox" aria-label="156460"></td><td>unfinished</td><td>New Construction</td><td>156460</td><td class="num">1.00</td><td class="num">7.45</td><td class="num">2.39</td><td class="num">0.31</td><td class="num">5.520</td><td></td></tr>
            <tr><td class="mid"><input type="checkbox" aria-label="178009"></td><td>unfinished</td><td>New Construction</td><td>178009</td><td class="num">1.00</td><td class="num">4.62</td><td class="num">2.74</td><td class="num">0.31</td><td class="num">3.924</td><td></td></tr>
            <tr><td class="mid"><input type="checkbox" aria-label="178578"></td><td>unfinished</td><td>New Construction</td><td>178578</td><td class="num">1.00</td><td class="num">0.44</td><td class="num">2.74</td><td class="num">0.31</td><td class="num">0.374</td><td></td></tr>
            <tr class="sum"><td></td><td></td><td></td><td></td><td></td><td></td><td></td><td></td><td class="num">39.130</td><td class="num">39.130</td></tr>
            <tr class="sum strong"><td></td><td></td><td></td><td></td><td></td><td></td><td></td><td></td><td></td><td></td></tr>
          </tbody>
        </table>
      </div>
      <footer><button class="accept">Accept</button></footer>
    </section>
  </div>

  <!-- Window with the entities of the selected type -->
  <section class="elements">
    <div class="bluebar"><svg class="icon"><use href="#plan"/></svg><h3>CCS010 | m³ Basement wall, H&lt;=3 m (6 Elements)</h3></div>
    <div class="elements-tools"></div>
    <div class="elements-list">
      <table>
        <colgroup><col class="w60"><col><col class="w91"><col><col><col><col><col class="w236"><col class="w56"><col class="w54"><col class="w65"><col class="w80"><col class="w49"><col class="w60"></colgroup>
        <thead><tr><th>Id</th><th>Category</th><th>Family Name</th><th>Type Name</th><th>Rooms</th><th>Mark</th><th>Phase created</th><th>Level</th><th class="mid">Length</th><th class="mid">Height</th><th class="mid">Net area</th><th class="mid">Net volume</th><th class="mid">Area</th><th class="mid">Volume</th></tr></thead>
        <tbody>
          <tr class="current"><td class="num mark">156387</td><td class="pale">Walls</td><td>Basic Wall</td><td class="pale">Foundation - 12" Concrete</td><td class="pale">garage</td><td class="pale">?</td><td class="pale">New Construction</td><td class="pale">basement</td><td class="num green">7.01</td><td class="num green">2.74</td><td class="num green">20.07</td><td class="num green">6.12</td><td class="num green">20.07</td><td class="num green">6.12</td></tr>
          <tr><td class="num">156430</td><td class="pale">Walls</td><td>Basic Wall</td><td class="pale">Foundation - 12" Concrete</td><td class="pale">garage, unfinished</td><td class="pale">?</td><td class="pale">New Construction</td><td class="pale">basement</td><td class="num green">11.44</td><td class="num green">2.74</td><td class="num green">26.36</td><td class="num green">7.98</td><td class="num green">26.36</td><td class="num green">7.98</td></tr>
          <tr><td class="num">156460</td><td class="pale">Walls</td><td>Basic Wall</td><td class="pale">Foundation - 12" Concrete</td><td class="pale">unfinished</td><td class="pale">?</td><td class="pale">New Construction</td><td class="pale">basement</td><td class="num green">7.45</td><td class="num green">2.39</td><td class="num green">18.57</td><td class="num green">5.66</td><td class="num green">18.57</td><td class="num green">5.66</td></tr>
          <tr><td class="num">156485</td><td class="pale">Walls</td><td>Basic Wall</td><td class="pale">Foundation - 12" Concrete</td><td class="pale">garage, rec. room, unfinished</td><td class="pale">?</td><td class="pale">New Construction</td><td class="pale">basement</td><td class="num green">16.06</td><td class="num green">2.74</td><td class="num green">41.82</td><td class="num green">12.75</td><td class="num green">41.82</td><td class="num green">12.75</td></tr>
          <tr><td class="num">178009</td><td class="pale">Walls</td><td>Basic Wall</td><td class="pale">Foundation - 12" Concrete</td><td class="pale">unfinished</td><td class="pale">?</td><td class="pale">New Construction</td><td class="pale">basement</td><td class="num green">4.62</td><td class="num green">2.74</td><td class="num green">11.85</td><td class="num green">3.61</td><td class="num green">11.85</td><td class="num green">3.61</td></tr>
          <tr><td class="num">178578</td><td class="pale">Walls</td><td>Basic Wall</td><td class="pale">Foundation - 12" Concrete</td><td class="pale">unfinished</td><td class="pale">?</td><td class="pale">New Construction</td><td class="pale">basement</td><td class="num green">0.44</td><td class="num green">2.74</td><td class="num green">1.20</td><td class="num green">0.37</td><td class="num green">1.20</td><td class="num green">0.37</td></tr>
        </tbody>
        <tfoot><tr><td>TOTAL</td><td></td><td></td><td></td><td></td><td></td><td></td><td></td><td class="num">47.02</td><td></td><td class="num">119.87</td><td class="num">36.49</td><td class="num">119.87</td><td class="num">36.49</td></tr></tfoot>
      </table>
    </div>
  </section>

  <div class="top-strip"></div>

  <!-- Hand-drawn notes over the windows -->
  <svg class="notes" width="2046" height="1130" viewBox="0 0 2046 1130" aria-hidden="true">
    <path d="M71.500 548h1081v20.500h-1081z"/>
    <path d="M1249 234C1100 299 940 369 780 440C700 476 630 508 560 547C470 595 385 640 335 700C300 742 285 800 277 904"/>
    <path d="M268 877L277 904L290 881"/>
    <path d="M70 569L48 582Q37 589 41 600Q44 612 53 624M34 614L53 624L54 606"/>
    <path d="M938 640C915 695 867 755 867 807C867 850 900 870 941 920M915 907L941 920L930 888"/>
    <path d="M1043 919C1075 845 1120 785 1120 733C1120 695 1090 680 1043 640M1081 648L1043 640L1061 670"/>
  </svg>
</body>
</html>
```
FILE: styles.css
```css
* {
  box-sizing: border-box;
}
body {
  margin: 0;
  background: #fff;
  color: #000;
  font: 12px/15px "Liberation Sans", Arial, sans-serif;
  height: 100vh;
  overflow: hidden;
  position: relative;
}
h1, h2, h3, p {
  margin: 0;
  font-size: 12px;
  font-weight: normal;
}
button, input, select, textarea {
  font: inherit;
  color: inherit;
  margin: 0;
}
button {
  padding: 0;
  border: none;
  background: none;
}
.icon-set {
  position: absolute;
  width: 0;
  height: 0;
}
.icon {
  width: 16px;
  height: 16px;
  flex: none;
  display: block;
}
.window {
  margin-right: 126px;
  background: #f0f0f0;
}

/* Title bar */
.titlebar {
  height: 23px;
  padding-left: 2px;
  background: #0078d7;
  color: #fff;
  display: flex;
  align-items: center;
  gap: 5px;
}
.titlebar h1 {
  font-family: "Segoe UI", "Open Sans", sans-serif;
  flex: 1;
}
.title-buttons {
  display: flex;
  gap: 30px;
  padding-right: 17px;
}
.top-strip {
  position: absolute;
  top: 0;
  left: 888px;
  width: 193px;
  height: 1px;
  background: #e8e8e8;
}

/* Panes */
.workspace {
  display: grid;
  grid-template-columns: 783fr 8px 1129fr;
  height: 591px;
}
.side {
  display: flex;
  flex-direction: column;
  min-width: 0;
}
.banner {
  height: 55px;
  display: flex;
  color: #fff;
}
.banner-gray {
  background: #c5cacd;
  padding: 3px;
  gap: 6px;
}
.banner-blue {
  background: #4281c9;
  padding: 1px 1px 0;
  gap: 4px;
}
.logo {
  width: 36px;
  height: 36px;
}
.banner-text {
  flex: 1;
  padding-top: 3px;
}
.banner-gray .banner-text {
  padding-top: 1px;
}
.banner-text h2 {
  font-size: 17px;
  line-height: 24px;
}
.banner-text h2.wide {
  font-size: 18px;
}
.banner-text p {
  line-height: 29px;
}
.revit {
  width: 34px;
  display: flex;
  flex-direction: column;
  align-items: center;
  gap: 2px;
}
.revit-logo {
  width: 34px;
  height: 35px;
  border: 1px solid #999;
  outline: 1px solid #fff;
  outline-offset: -2px;
  background: linear-gradient(135deg, #fff, #c3d7ee);
  color: #1b5a9c;
  font-size: 32px;
  font-weight: bold;
  line-height: 34px;
  text-align: center;
}
.banner-tools {
  display: flex;
  align-items: flex-end;
  gap: 7px;
  padding: 0 2px 3px;
  color: #4a4a4a;
}
.toolbar {
  height: 24px;
  padding-left: 3px;
  background: linear-gradient(#f0f0f0, #f8f8f8, #eee);
  display: flex;
  align-items: center;
  gap: 7px;
}
.toolbar.ruled {
  height: 25px;
  padding-left: 4px;
  border-top: 1px solid #a0a0a0;
  background: #f0f0f0;
}
.sep {
  width: 1px;
  height: 18px;
  background: #808080;
}
.split-v {
  width: 8px;
  background: repeating-linear-gradient(#b4b4b4 0 2px, #f0f0f0 2px 4px) center / 2px 14px no-repeat;
}
.split-h {
  height: 9px;
  flex: none;
  background: repeating-linear-gradient(90deg, #b4b4b4 0 2px, #f0f0f0 2px 4px) center / 14px 2px no-repeat;
}
.split-h.short {
  height: 8px;
}
.box {
  border: 1px solid #828790;
  background: #fff;
  padding: 1px;
  overflow: hidden;
}
.grow {
  flex: 1;
}
.job {
  flex: 1;
  display: grid;
  grid-template-columns: 231fr 8px 544fr;
  min-height: 0;
}
.job-tree, .job-items {
  display: flex;
  flex-direction: column;
  min-width: 0;
}
.job-tree .tree {
  margin-top: 4px;
  flex: 1;
}
.links {
  height: 92px;
}
.desc-label {
  font-weight: bold;
  line-height: 17px;
}
.description {
  height: 103px;
  padding: 3px 5px;
  border: 1px solid #828790;
  box-shadow: inset 0 0 0 1px #fff;
  background: #f0f0f0;
  resize: none;
  outline: none;
}

/* Trees */
.tree ul {
  margin: 0;
  padding: 0;
  list-style: none;
}
.tree li {
  background: repeating-linear-gradient(#808080 0 1px, #fff 1px 2px) 11px 0 / 1px 100% no-repeat;
}
.tree li:last-child {
  background-size: 1px 9px;
}
.tree .continued > li:last-child {
  background-size: 1px 100%;
}
.tree li ul {
  margin-left: 19px;
}
.row {
  height: 18px;
  padding-left: 22px;
  display: flex;
  align-items: center;
  white-space: nowrap;
  background: repeating-linear-gradient(90deg, #808080 0 1px, #fff 1px 2px) 11px 9px / 11px 1px no-repeat;
}
.row.root {
  padding-left: 3px;
  background: none;
}
.toggle {
  width: 9px;
  height: 9px;
  margin: 1px 6px 0 -15px;
  border: 1px solid #919191;
  background: #fff;
  color: #1a3fa0;
  font-size: 9px;
  line-height: 7px;
  text-align: center;
  flex: none;
}
.label {
  height: 18px;
  line-height: 19px;
  padding: 0 3px;
  margin-left: 2px;
}
.label.selected {
  background: #efefef;
}
.tree-scroll {
  width: 276px;
  display: flex;
}
.tree-scroll ul.continued {
  flex: 1;
}
.scrollbar {
  width: 16px;
  background: #f0f0f0;
  color: #505050;
  display: flex;
  flex-direction: column;
}
.flip {
  transform: rotate(180deg);
}
.track {
  flex: 1;
  display: flex;
  align-items: flex-end;
  padding-bottom: 11px;
}
.thumb {
  width: 100%;
  height: 185px;
  background: #cdcdcd;
}

/* Tabs */
.tabs {
  height: 22px;
  display: flex;
  align-items: flex-end;
}
.tab {
  height: 20px;
  padding: 0 3px;
  border: 1px solid #dcdcdc;
  border-bottom: none;
  display: flex;
  align-items: center;
  gap: 4px;
}
.tab.open {
  height: 22px;
  padding: 0 5px;
  background: #fff;
}
.tab-page {
  flex: 1;
  min-height: 0;
  margin-right: 2px;
  padding: 1px 1px 2px 3px;
  border: 1px solid #dcdcdc;
  box-shadow: inset 0 1px #fff;
  display: flex;
}
.types {
  flex: 1;
  display: flex;
  flex-direction: column;
  min-width: 0;
}
.types-head {
  height: 28px;
  padding: 0 8px 0 3px;
  display: flex;
  align-items: center;
  gap: 3px;
}
.types-head h3 {
  font-weight: bold;
  flex: 1;
}
.types-head button + button {
  margin-left: 5px;
}

/* Data grids */
table {
  width: 100%;
  table-layout: fixed;
  border-collapse: separate;
  border-spacing: 0;
}
th, td {
  padding: 0 6px;
  border-right: 1px solid #e5e5e5;
  text-align: left;
  font-weight: normal;
  white-space: nowrap;
  overflow: hidden;
}
th {
  height: 24px;
}
th.plain {
  border-right-color: transparent;
}
td {
  height: 20px;
  line-height: 19px;
  border-color: #efefef;
  border-bottom: 1px solid #efefef;
}
.num {
  text-align: right;
}
.mid {
  text-align: center;
  padding: 0;
}
.mark {
  padding: 0;
  background: #bfbfbf;
}
td .icon {
  margin: 0 auto;
}
.current td {
  background: #efefef;
}
.current td.mark {
  background: #bfbfbf;
}
.mark.joined {
  border-right-color: #bfbfbf;
}
.num.mark {
  padding: 0 6px;
}
.active td {
  background: #cce8ff;
}
.active td.mark {
  background: #bfbfbf;
}
.active td.pick {
  background: #4c9fe0;
}
.green {
  background: #deedd0;
}
.current td.green {
  background: #e5ede0;
}
.tan {
  background: #e6dad1;
}
.current td.tan {
  background: #e9e3e0;
}
.pale {
  background: #f6faf2;
}
.current td.pale {
  background: #f2f4ef;
}
.types-table td.focus {
  background: #bfbfbf;
  outline: 1px dotted #000;
  outline-offset: -1px;
}
.sorted {
  background: linear-gradient(45deg, transparent 45%, #777 45% 60%, transparent 60%) 89px 3px / 4px 4px no-repeat,
              linear-gradient(-45deg, transparent 45%, #777 45% 60%, transparent 60%) 85px 3px / 4px 4px no-repeat;
}
.group td + td {
  background: #ceffce;
}
.sum td + td {
  background: #ffffce;
  color: #000080;
}
.sum.strong td + td {
  background: #ffffb0;
}
.w20 { width: 20px; }
.w33 { width: 33px; }
.w36 { width: 36px; }
.w47 { width: 47px; }
.w49 { width: 49px; }
.w50 { width: 50px; }
.w52 { width: 52px; }
.w54 { width: 54px; }
.w56 { width: 56px; }
.w57 { width: 57px; }
.w60 { width: 60px; }
.w62 { width: 62px; }
.w63 { width: 63px; }
.w65 { width: 65px; }
.w71 { width: 71px; }
.w80 { width: 80px; }
.w91 { width: 91px; }
.w116 { width: 116px; }
.w236 { width: 236px; }

input[type="checkbox"] {
  appearance: none;
  width: 11px;
  height: 11px;
  border: 1px solid #707070;
  background: #fff;
  vertical-align: middle;
}
input[type="checkbox"].big {
  width: 13px;
  height: 13px;
  border-color: #333;
}

/* Measurement detail */
.bluebar {
  height: 30px;
  padding-left: 12px;
  background: #4281c9;
  color: #fff;
  display: flex;
  align-items: center;
  gap: 11px;
}
.bluebar .icon {
  color: #0f0;
}
.form-row {
  height: 32px;
  padding: 0 13px 0 3px;
  display: flex;
  align-items: center;
  gap: 8px;
}
.form-row.second {
  height: 28px;
  padding-left: 7px;
  gap: 6px;
}
.second .big {
  margin-right: -2px;
}
.combo {
  display: grid;
  align-items: center;
  height: 23px;
}
.combo-units {
  width: 117px;
}
.combo-wide {
  width: 350px;
}
.combo select, .combo .icon {
  grid-area: 1 / 1;
}
.combo .icon {
  justify-self: end;
  margin-right: 1px;
  pointer-events: none;
}
.combo select {
  appearance: none;
  height: 23px;
  padding: 0 3px;
  border: 1px solid #adadad;
  border-radius: 0;
  background: #e1e1e1;
}
.combo select:disabled {
  border-color: #bfbfbf;
  background: #ccc;
  color: #838383;
  opacity: 1;
}
.combo-units .icon {
  color: #9a9a9a;
}
.form-tools {
  display: flex;
  align-items: center;
  gap: 6px;
  height: 26px;
  align-self: flex-start;
}
.pressed {
  padding: 3px;
  border: 1px solid #90c8f6;
  background: #c0dcf3;
}
.total {
  margin-left: auto;
}
.amount {
  width: 50px;
  height: 24px;
  margin-left: 2px;
  padding: 0 5px;
  border: 1px solid #7a7a7a;
  background: #fff;
  text-align: right;
}
.measures {
  height: 294px;
  padding-right: 2px;
}
footer {
  height: 34px;
  padding: 5px 4px;
  background: #e4e4e4;
  border-top: 1px solid #fff;
}
.accept {
  width: 54px;
  height: 25px;
  border: 1px solid #adadad;
  background: #e1e1e1;
}

/* Entities window */
.elements {
  position: absolute;
  left: 129px;
  right: 0;
  top: 904px;
  background: #f0f0f0;
}
.elements .bluebar {
  padding-left: 9px;
}
.elements-tools {
  height: 31px;
}
.elements-list {
  border-top: 1px solid #828790;
  padding: 1px 0 0 1px;
  background: #fff;
}
.elements tfoot td {
  padding: 0 3px;
  background: #dfdfdf;
}

.notes {
  position: absolute;
  left: 0;
  top: 0;
  pointer-events: none;
  fill: none;
  stroke: #ed1c24;
  stroke-width: 3px;
  stroke-linecap: round;
  stroke-linejoin: round;
}
```
